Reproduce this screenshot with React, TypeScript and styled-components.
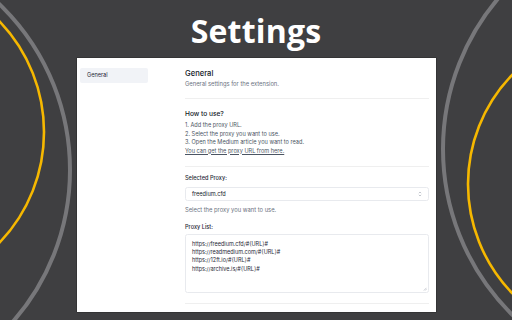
import React from "react";
import styled, { createGlobalStyle } from "styled-components";

const Global = createGlobalStyle`
  html, body { margin: 0; padding: 0; }
  body {
    width: 512px;
    height: 320px;
    overflow: hidden;
    background: #3f3f41;
    font-family: Inter, "Liberation Sans", Arial, sans-serif;
  }
  * { box-sizing: border-box; }
`;

const Page = styled.div`
  position: relative;
  width: 512px;
  height: 320px;
  overflow: hidden;
`;

const Backdrop = styled.svg`
  position: absolute;
  inset: 0;
  z-index: 0;
`;

const Content = styled.div`
  position: relative;
  z-index: 1;
  display: flex;
  flex-direction: column;
`;

const Title = styled.h1`
  margin: 0;
  padding-top: 4px;
  height: 58px;
  line-height: 54px;
  text-align: center;
  font-family: "Open Sans", "Noto Sans", sans-serif;
  font-weight: 700;
  font-size: 32px;
  color: #ffffff;
  letter-spacing: 0.2px;
`;

const Panel = styled.div`
  margin-left: 77px;
  width: 359px;
  height: 254px;
  background: #ffffff;
  display: flex;
  padding: 10px 7px 0 3px;
  gap: 37px;
  box-shadow: 0 0 0 0.5px rgba(0, 0, 0, 0.35);
`;

const Sidebar = styled.nav`
  width: 68px;
  display: flex;
  flex-direction: column;
`;

const NavItem = styled.div<{ $active?: boolean }>`
  height: 15px;
  line-height: 15px;
  padding-left: 7px;
  border-radius: 2px;
  font-size: 5.6px;
  color: #1f2937;
  background: ${(p) => (p.$active ? "#f1f3f7" : "transparent")};
`;

const Main = styled.main`
  width: 244px;
  display: flex;
  flex-direction: column;
`;

const Heading = styled.h2`
  margin: 0;
  font-size: 7.6px;
  line-height: 12px;
  font-weight: 500;
  color: #111827;
`;

const SubHeading = styled.h3<{ $top?: number }>`
  margin: ${(p) => p.$top ?? 0}px 0 0;
  font-size: 6.6px;
  line-height: 10px;
  font-weight: 500;
  color: #111827;
`;

const Muted = styled.p<{ $top?: number }>`
  margin: ${(p) => p.$top ?? 0}px 0 0;
  font-size: 5.8px;
  line-height: 8px;
  color: #6b7280;
`;

const Divider = styled.hr<{ $top: number }>`
  margin: ${(p) => p.$top}px 0 0;
  border: none;
  border-top: 1px solid #efefef;
  height: 0;
`;

const Steps = styled.ol`
  margin: 2px 0 0;
  padding: 0;
  list-style: none;
`;

const Step = styled.li`
  font-size: 5.6px;
  line-height: 8.5px;
  color: #4b5563;
`;

const Link = styled.a`
  color: #4b5563;
  text-decoration: underline;
  text-underline-offset: 1px;
`;

const Label = styled.label<{ $top: number }>`
  display: block;
  margin-top: ${(p) => p.$top}px;
  font-size: 5.6px;
  line-height: 8px;
  font-weight: 500;
  color: #1f2937;
`;

const SelectBox = styled.div`
  margin-top: 5px;
  height: 14px;
  border: 1px solid #e8eaee;
  border-radius: 2.5px;
  display: flex;
  align-items: center;
  justify-content: space-between;
  padding: 0 6px;
  font-size: 5.6px;
  color: #111827;
`;

const TextArea = styled.div`
  position: relative;
  margin-top: 3px;
  height: 59px;
  border: 1px solid #e8eaee;
  border-radius: 2.5px;
  padding: 5px 6px 0;
  font-size: 5.5px;
  line-height: 8.2px;
  color: #1f2937;
  white-space: pre;
`;

const Grip = styled.svg`
  position: absolute;
  right: 1px;
  bottom: 1px;
`;

const proxies = [
  "https://freedium.cfd/#{URL}#",
  "https://readmedium.com/#{URL}#",
  "https://12ft.io/#{URL}#",
  "https://archive.is/#{URL}#",
];

export default function App() {
  return (
    <Page>
      <Global />
      <Backdrop width="512" height="320" viewBox="0 0 512 320">
        <circle cx="-160" cy="170" r="230" fill="none" stroke="#77777a" strokeWidth="4" />
        <circle cx="-116" cy="132" r="160" fill="none" stroke="#f6b800" strokeWidth="2.6" />
        <circle cx="676" cy="149" r="233" fill="none" stroke="#77777a" strokeWidth="4" />
        <circle cx="625" cy="184" r="157" fill="none" stroke="#f6b800" strokeWidth="2.6" />
      </Backdrop>
      <Content>
        <Title>Settings</Title>
        <Panel>
          <Sidebar>
            <NavItem $active>General</NavItem>
          </Sidebar>
          <Main>
            <Heading>General</Heading>
            <Muted>General settings for the extension.</Muted>
            <Divider $top={10} />
            <SubHeading $top={10}>How to use?</SubHeading>
            <Steps>
              <Step>1. Add the proxy URL.</Step>
              <Step>2. Select the proxy you want to use.</Step>
              <Step>3. Open the Medium article you want to read.</Step>
              <Step>
                <Link>You can get the proxy URL from here.</Link>
              </Step>
            </Steps>
            <Divider $top={11} />
            <Label $top={7}>Selected Proxy:</Label>
            <SelectBox>
              <span>freedium.cfd</span>
              <svg width="4" height="6" viewBox="0 0 4 6">
                <path d="M0.8 2.2 L2 1 L3.2 2.2 M0.8 3.8 L2 5 L3.2 3.8" fill="none" stroke="#9ca3af" strokeWidth="0.6" />
              </svg>
            </SelectBox>
            <Muted $top={5}>Select the proxy you want to use.</Muted>
            <Label $top={9}>Proxy List:</Label>
            <TextArea>
              {proxies.join("\n")}
              <Grip width="4" height="4" viewBox="0 0 4 4">
                <path d="M3.5 0.8 L0.8 3.5 M3.5 2.2 L2.2 3.5" stroke="#9ca3af" strokeWidth="0.5" />
              </Grip>
            </TextArea>
            <Divider $top={10} />
          </Main>
        </Panel>
      </Content>
    </Page>
  );
}
